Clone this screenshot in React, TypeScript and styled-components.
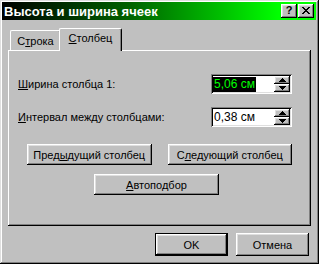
import { FC } from "react";
import styled, { createGlobalStyle, css } from "styled-components";

const GlobalStyle = createGlobalStyle`
  html, body {
    margin: 0;
    padding: 0;
    background: #c0c0c0;
  }
  body {
    font-family: "Liberation Sans", Arial, sans-serif;
    font-size: 11px;
    color: #000;
  }
`;

const raised = css`
  box-shadow: inset -1px -1px #000, inset 1px 1px #fff,
    inset -2px -2px #808080, inset 2px 2px #dfdfdf;
`;

const Key: FC<{ children: string }> = ({ children }) => <u>{children}</u>;

type SpinProps = {
  value: string;
  selected?: boolean;
};

const Spin: FC<SpinProps> = ({ value, selected }) => (
  <SpinBox>
    <SpinText $selected={selected}>{value}</SpinText>
    <SpinButtons>
      <SpinButton>
        <svg width="7" height="4" viewBox="0 0 7 4">
          <path d="M3 0h1v1h1v1h1v1h1v1H0V3h1V2h1V1h1z" fill="#000" />
        </svg>
      </SpinButton>
      <SpinButton>
        <svg width="7" height="4" viewBox="0 0 7 4">
          <path d="M0 0h7v1H6v1H5v1H4v1H3V3H2V2H1V1H0z" fill="#000" />
        </svg>
      </SpinButton>
    </SpinButtons>
  </SpinBox>
);

const App: FC = () => (
  <>
    <GlobalStyle />
    <Window>
      <TitleBar>
        <TitleText>Высота и ширина ячеек</TitleText>
        <CaptionButtons>
          <CaptionButton>?</CaptionButton>
          <CaptionButton>
            <svg width="8" height="7" viewBox="0 0 8 7">
              <path
                d="M0 0h2v1h1v1h2V1h1V0h2v1H7v1H6v1H5v1h1v1h1v1h1v1H6V6H5V5H3v1H2v1H0V6h1V5h1V4h1V3H2V2H1V1H0z"
                fill="#000"
              />
            </svg>
          </CaptionButton>
        </CaptionButtons>
      </TitleBar>
      <Body>
        <TabStrip>
          <Tab $width={51}>
            С<Key>т</Key>рока
          </Tab>
          <Tab $width={59} $active>
            <Key>С</Key>толбец
          </Tab>
        </TabStrip>
        <Panel>
          <FieldRow>
            <span>
              <Key>Ш</Key>ирина столбца 1:
            </span>
            <Spin value="5,06 см" selected />
          </FieldRow>
          <FieldRow>
            <span>
              <Key>И</Key>нтервал между столбцами:
            </span>
            <Spin value="0,38 см" />
          </FieldRow>
          <ButtonRow>
            <Button $width={125} $height={21}>
              Пред<Key>ы</Key>дущий столбец
            </Button>
            <Button $width={125} $height={21}>
              С<Key>л</Key>едующий столбец
            </Button>
          </ButtonRow>
          <AutoRow>
            <Button $width={125} $height={21}>
              <Key>А</Key>втоподбор
            </Button>
          </AutoRow>
        </Panel>
        <Footer>
          <Button $width={73} $height={23} $default>
            OK
          </Button>
          <Button $width={73} $height={23}>
            Отмена
          </Button>
        </Footer>
      </Body>
    </Window>
  </>
);

export default App;

const Window = styled.div`
  box-sizing: border-box;
  width: 319px;
  height: 264px;
  padding: 2px 3px 3px 2px;
  background: #c0c0c0;
  box-shadow: inset -1px -1px #000, inset 1px 1px #dfdfdf,
    inset -2px -2px #808080, inset 2px 2px #fff;
  display: flex;
  flex-direction: column;
`;

const TitleBar = styled.div`
  height: 18px;
  display: flex;
  align-items: center;
  justify-content: space-between;
  padding: 0 2px 0 2px;
  background: linear-gradient(
    to right,
    #000 0%,
    #006000 40%,
    #00c000 70%,
    #00ff00 88%,
    #00ff00 100%
  );
`;

const TitleText = styled.span`
  color: #fff;
  font-weight: bold;
  font-size: 13px;
  white-space: nowrap;
`;

const CaptionButtons = styled.div`
  display: flex;
  gap: 1px;
`;

const CaptionButton = styled.div`
  width: 16px;
  height: 14px;
  background: #c0c0c0;
  ${raised};
  display: flex;
  align-items: center;
  justify-content: center;
  font-weight: bold;
  font-size: 11px;
  line-height: 1;
  padding-bottom: 1px;
  box-sizing: border-box;
`;

const Body = styled.div`
  flex: 1;
  display: flex;
  flex-direction: column;
  padding: 8px 5px 0 6px;
`;

const TabStrip = styled.div`
  height: 22px;
  display: flex;
  align-items: flex-end;
  padding-left: 2px;
  position: relative;
  z-index: 1;
`;

const Tab = styled.div<{ $width: number; $active?: boolean }>`
  box-sizing: border-box;
  width: ${(p) => p.$width}px;
  height: 20px;
  display: flex;
  align-items: center;
  justify-content: center;
  background: #c0c0c0;
  border-top: 1px solid #fff;
  border-left: 1px solid #fff;
  border-right: 1px solid #000;
  border-radius: 2px 2px 0 0;
  box-shadow: inset -1px 0 #808080;
  ${(p) =>
    p.$active &&
    css`
      width: ${p.$width + 4}px;
      height: 23px;
      margin: 0 -2px -1px -2px;
      padding-bottom: 4px;
      position: relative;
      z-index: 2;
    `}
`;

const Panel = styled.div`
  box-sizing: border-box;
  height: 176px;
  padding: 24px 19px 0 10px;
  box-shadow: inset -1px -1px #000, inset 1px 1px #fff,
    inset -2px -2px #808080;
  display: flex;
  flex-direction: column;
`;

const FieldRow = styled.div`
  display: flex;
  align-items: center;
  justify-content: space-between;
  margin-bottom: 13px;
`;

const SpinBox = styled.div`
  box-sizing: border-box;
  width: 81px;
  height: 20px;
  padding: 2px;
  background: #fff;
  box-shadow: inset 1px 1px #808080, inset -1px -1px #fff,
    inset 2px 2px #000, inset -2px -2px #dfdfdf;
  display: flex;
  align-items: stretch;
`;

const SpinText = styled.span<{ $selected?: boolean }>`
  flex: 1;
  display: flex;
  align-items: center;
  padding-left: 1px;
  font-size: 12px;
  ${(p) =>
    p.$selected &&
    css`
      flex: 0 0 auto;
      align-self: center;
      height: 15px;
      padding: 0 1px;
      background: #000;
      color: #00ff00;
      margin-right: auto;
    `}
`;

const SpinButtons = styled.div`
  width: 16px;
  display: flex;
  flex-direction: column;
`;

const SpinButton = styled.div`
  flex: 1;
  background: #c0c0c0;
  ${raised};
  display: flex;
  align-items: center;
  justify-content: center;
`;

const Button = styled.div<{
  $width: number;
  $height: number;
  $default?: boolean;
}>`
  box-sizing: border-box;
  width: ${(p) => p.$width}px;
  height: ${(p) => p.$height}px;
  background: #c0c0c0;
  display: flex;
  align-items: center;
  justify-content: center;
  font-size: 11px;
  ${raised};
  ${(p) =>
    p.$default &&
    css`
      border: 1px solid #000;
    `}
`;

const ButtonRow = styled.div`
  display: flex;
  justify-content: center;
  gap: 16px;
  margin-top: 4px;
  margin-left: 9px;
`;

const AutoRow = styled.div`
  display: flex;
  justify-content: center;
  margin-top: 9px;
  margin-left: 3px;
`;

const Footer = styled.div`
  display: flex;
  justify-content: flex-end;
  gap: 8px;
  padding-right: 2px;
  margin-top: 7px;
`;
